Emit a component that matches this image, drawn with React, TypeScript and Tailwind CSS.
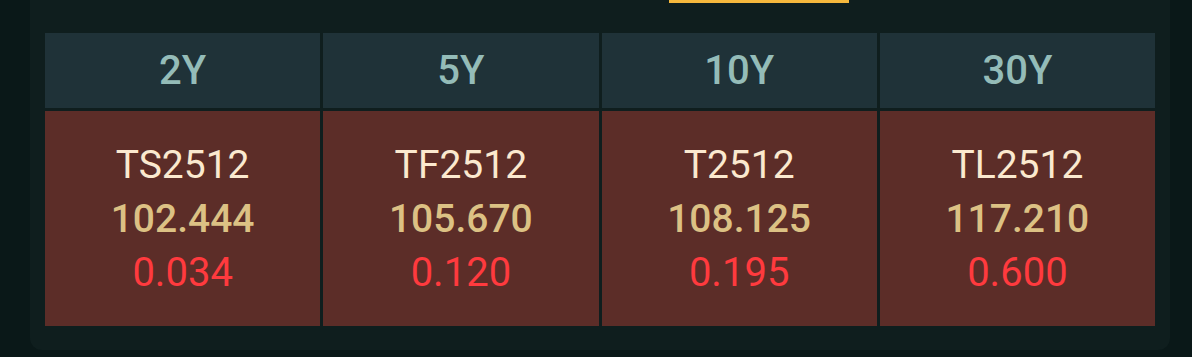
import React from "react";

const items = [
  { term: "2Y", code: "TS2512", price: "102.444", chg: "0.034" },
  { term: "5Y", code: "TF2512", price: "105.670", chg: "0.120" },
  { term: "10Y", code: "T2512", price: "108.125", chg: "0.195" },
  { term: "30Y", code: "TL2512", price: "117.210", chg: "0.600" },
];

export default function App() {
  return (
    <div
      className="w-[1192px] h-[357px] bg-[#0a1818] pl-[30px] pr-[22px] overflow-hidden"
      style={{ fontFamily: "Roboto, 'Noto Sans', sans-serif" }}
    >
      <div className="relative h-[350px] bg-[#0f1e1e] rounded-b-[12px] px-[15px] pt-[33px]">
        <div className="absolute left-[639px] top-0 w-[180px] h-[3px] bg-[#f5b83d]" />
        <div className="grid grid-cols-4 gap-[3px]">
          {items.map((it) => (
            <div key={it.term} className="flex flex-col gap-[3px]">
              <div className="h-[75px] bg-[#1f3238] flex items-center justify-center text-[40px] font-medium text-[#94bcb8]">
                {it.term}
              </div>
              <div className="h-[215px] bg-[#5c2d28] flex flex-col items-center justify-center leading-[54px]">
                <div className="text-[39px] font-normal text-[#fbe9cf]">{it.code}</div>
                <div className="text-[39px] font-medium text-[#dcc184]">{it.price}</div>
                <div className="text-[40px] text-[#ff3a3e]">{it.chg}</div>
              </div>
            </div>
          ))}
        </div>
      </div>
    </div>
  );
}
